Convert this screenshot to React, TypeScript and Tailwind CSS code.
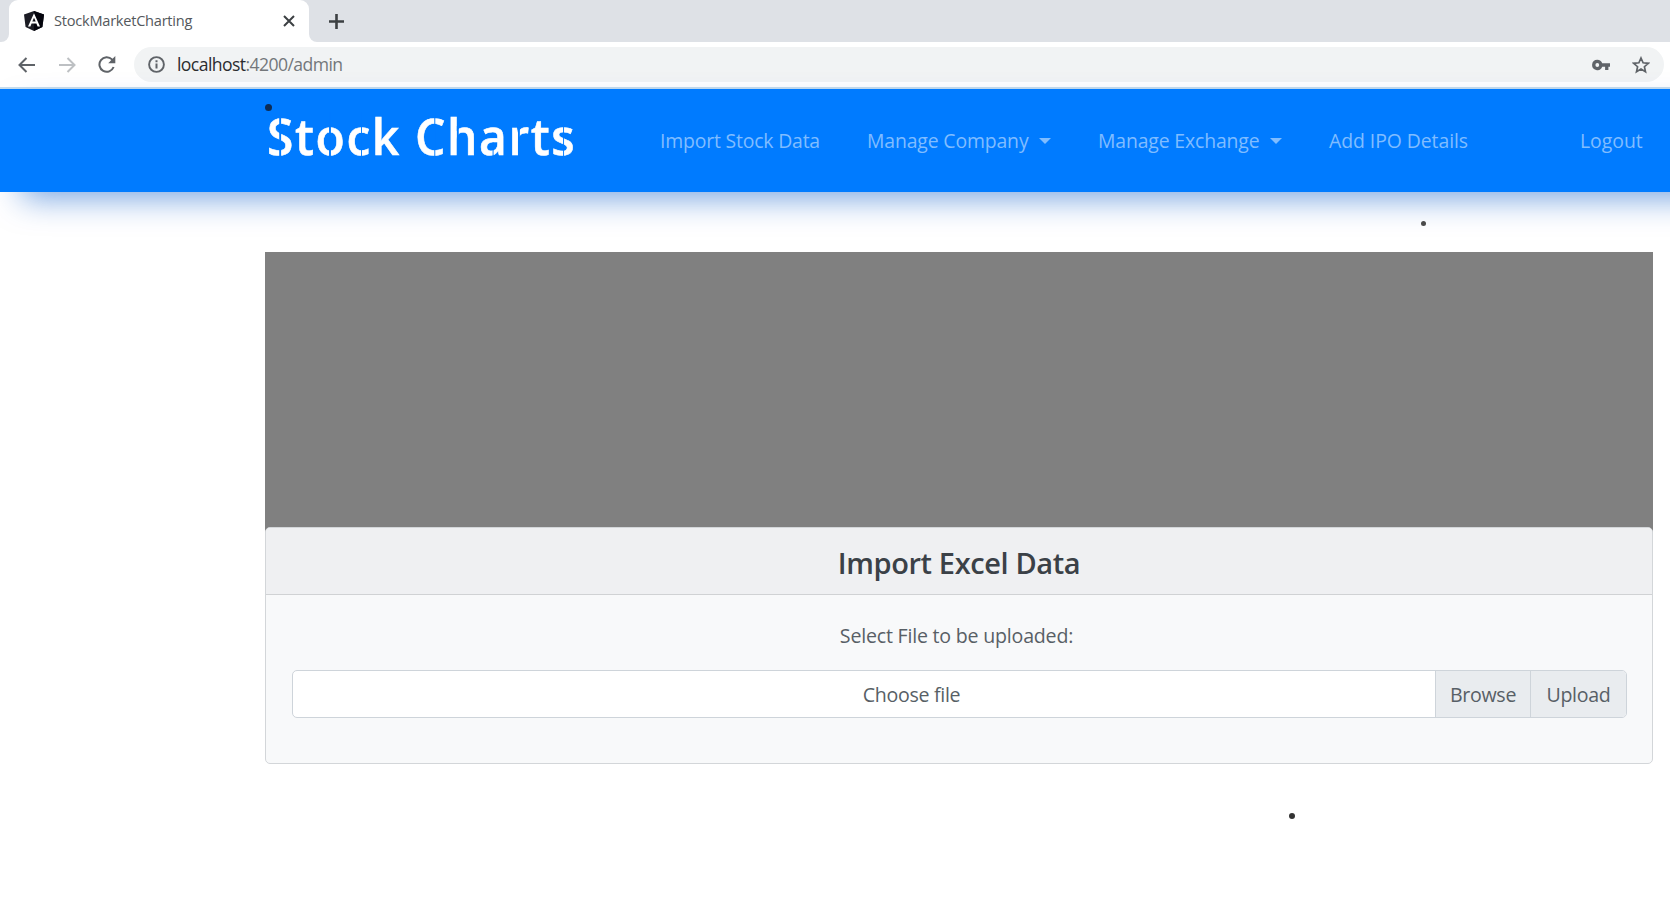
import React from "react";

const navItems = [
  { label: "Import Stock Data", box: "w-[207px]", caret: false, track: "tracking-[-0.18px]" },
  { label: "Manage Company", box: "w-[231px]", caret: true, track: "tracking-[-0.14px]" },
  { label: "Manage Exchange", box: "w-[231px]", caret: true, track: "tracking-[-0.14px]" },
  { label: "Add IPO Details", box: "w-[251px]", caret: false, track: "tracking-[-0.06px]" },
  { label: "Logout", box: "w-[80px]", caret: false, track: "tracking-[0px]" },
];

/* Stencil cuts: one thin bar per letter, in the colour of the bar behind it. */
const stencil = [
  { ch: "S", cut: "left-[44%] top-[12px] h-[48px]" },
  { ch: "t", cut: "" },
  { ch: "o", cut: "left-[45%] top-[12px] h-[48px]" },
  { ch: "c", cut: "left-[56%] top-[12px] h-[48px]" },
  { ch: "k", cut: "" },
  { ch: " ", cut: "" },
  { ch: "C", cut: "left-[60%] top-[12px] h-[48px]" },
  { ch: "h", cut: "left-[31%] top-[26px] h-[34px]" },
  { ch: "a", cut: "left-[45%] top-[42px] h-[18px]" },
  { ch: "r", cut: "left-[45%] top-[24px] h-[34px]" },
  { ch: "t", cut: "" },
  { ch: "s", cut: "left-[46%] top-[24px] h-[34px]" },
];

function AngularLogo() {
  return (
    <svg width="20" height="20" viewBox="0 0 20 20">
      <path d="M10 0 20 3.4 18.4 16 10 20 1.6 16 0 3.4Z" fill="#1b1c24" />
      <path d="M10 0 20 3.4 18.4 16 10 20Z" fill="#04050d" />
      <path d="M10 2.2 4 15.4h2.4l1.2-3h4.8l1.2 3H16Zm0 4.5 1.7 3.9H8.3Z" fill="#fff" fillRule="evenodd" />
    </svg>
  );
}

function TabStrip() {
  return (
    <div className="flex h-[42px] items-end bg-[#dee1e6]">
      <div className="flex h-[42px] w-[9px] items-end bg-white">
        <div className="h-[42px] w-[9px] rounded-br-[8px] bg-[#dee1e6]" />
      </div>
      <div className="flex h-[42px] w-[300px] items-center rounded-t-[9px] bg-white pl-[15px] shadow-[-9px_-10px_0_#dee1e6]">
        <AngularLogo />
        <span className="ml-[10px] w-[229px] whitespace-nowrap pb-px text-[14.6px] tracking-[-0.25px] text-[#54585c]">
          StockMarketCharting
        </span>
        <svg width="12" height="12" viewBox="0 0 12 12" stroke="#3c4043" strokeWidth="2">
          <path d="M1 1 11 11M11 1 1 11" />
        </svg>
      </div>
      <div className="flex h-[42px] w-[9px] items-end bg-white">
        <div className="h-[42px] w-[9px] rounded-bl-[8px] bg-[#dee1e6]" />
      </div>
      <div className="flex h-[42px] items-center pl-[11px]">
        <svg width="15" height="15" viewBox="0 0 15 15" stroke="#3c4043" strokeWidth="2.6">
          <path d="M7.5 0V15M0 7.5H15" />
        </svg>
      </div>
    </div>
  );
}

function Toolbar() {
  return (
    <div className="flex h-[47px] items-center border-b-2 border-[#c5dced] bg-white pl-[18px] pr-[6px]">
      <svg width="17" height="16" viewBox="0 0 17 16" fill="none" stroke="#5f6368" strokeWidth="2">
        <path d="M17 8H1.5M8.5 1 1.5 8l7 7" />
      </svg>
      <svg className="ml-[24px]" width="17" height="16" viewBox="0 0 17 16" fill="none" stroke="#bdc0c3" strokeWidth="2">
        <path d="M0 8H15.5M8.5 1l7 7-7 7" />
      </svg>
      <svg className="ml-[22px]" width="18" height="17" viewBox="0 0 18 17" fill="none" stroke="#5f6368" strokeWidth="2">
        <path d="M15.6 11A7.3 7.3 0 1 1 14 3.4L16 5.4" />
        <path d="M17.3 0V7.2H10.2Z" fill="#5f6368" stroke="none" />
      </svg>
      <div className="ml-[18px] flex h-[35px] flex-1 items-center rounded-full bg-[#f1f3f4] pl-[14px] pr-[14px]">
        <svg width="17" height="17" viewBox="0 0 17 17" fill="none" stroke="#5f6368" strokeWidth="1.9">
          <circle cx="8.5" cy="8.5" r="7.4" />
          <path d="M8.5 7.5v5M8.5 4.3v2" strokeWidth="2" />
        </svg>
        <span className="ml-[12px] flex-1 whitespace-nowrap text-[17.6px] tracking-[-0.58px] text-[#73777b]">
          <span className="text-[#2b2c2f]">localhost</span>:4200/admin
        </span>
        <svg width="18" height="12" viewBox="0 0 18 12" fill="#5f6368">
          <path fillRule="evenodd" d="M5.3.7a5.2 5.2 0 0 1 4.9 3.6H18v3.4h-1.6V11h-3.3V7.7h-2.9A5.2 5.2 0 1 1 5.3.7Zm0 3.4a1.9 1.9 0 1 0 0 3.8 1.9 1.9 0 0 0 0-3.8Z" />
        </svg>
        <svg className="ml-[22px]" width="18" height="18" viewBox="0 0 18 18" fill="none" stroke="#5f6368" strokeWidth="1.7">
          <path d="m9 2 2.1 4.8 5.2.5-3.9 3.4 1.1 5.1L9 13.1l-4.5 2.7 1.1-5.1L1.7 7.3l5.2-.5Z" />
        </svg>
      </div>
    </div>
  );
}

function Navbar() {
  return (
    <nav className="relative flex h-[103px] w-[1730px] items-center bg-[#007bff] pl-[267px] shadow-[14px_14px_32px_-8px_rgba(0,85,200,0.55)]">
      <div className="w-[393px] pb-[12px]">
        <span className="inline-block origin-left scale-x-[0.94] whitespace-pre text-[51px] font-semibold leading-[60px] tracking-[1.7px] text-white [-webkit-text-stroke:0.6px_white]">
          {stencil.map((l, i) => (
            <span key={i} className="relative">
              {l.ch}
              {l.cut && <i className={`${l.cut} absolute w-[1.6px] bg-[#007bff]`} />}
            </span>
          ))}
        </span>
      </div>
      {navItems.map((n) => (
        <div key={n.label} className={`${n.box} ${n.track} flex shrink-0 items-center whitespace-nowrap pt-px text-[19.4px] text-[#80bdff]`}>
          {n.label}
          {n.caret && (
            <span className="ml-[11px] border-x-[6px] border-t-[6px] border-x-transparent border-t-[#80bdff]" />
          )}
        </div>
      ))}
      <span className="absolute left-[265px] top-[15px] size-[7px] rounded-full bg-[#0d2c55]" />
    </nav>
  );
}

export default function App() {
  return (
    <div className="relative h-[924px] w-[1670px] overflow-hidden bg-white font-['Open_Sans','Noto_Sans',sans-serif]">
      <TabStrip />
      <Toolbar />
      <Navbar />
      <main className="ml-[265px] mt-[60px] w-[1388px] text-[#585f66]">
        <div className="h-[280px] bg-[#808080]" />
        <section className="relative -mt-[5px] h-[237px] rounded-[5px] border border-[#d3d6d9] bg-[#f8f9fa] text-center">
          <h2 className="flex h-[67px] items-center justify-center rounded-t-[4px] border-b border-[#d0d2d4] bg-[#eff0f2] pt-[3px] text-[29px] font-semibold tracking-[-0.38px] text-[#3b4147]">
            Import Excel Data
          </h2>
          <p className="mt-[26px] pr-[5px] text-[19.6px] leading-[30px] tracking-[-0.21px]">
            Select File to be uploaded:
          </p>
          <div className="ml-[26px] mt-[19px] flex h-[48px] w-[1335px] overflow-hidden rounded-[5px] border border-[#ced4da] bg-white text-[19.6px] leading-[30px] tracking-[-0.3px]">
            <div className="flex w-[1142px] items-center justify-center pl-[95px] pt-[2px]">Choose file</div>
            <div className="flex w-[95px] items-center justify-center border-l border-[#ced4da] bg-[#e9ecef] pt-[2px]">Browse</div>
            <div className="flex flex-1 items-center justify-center border-l border-[#ced4da] bg-[#e9ecef] pt-[2px]">Upload</div>
          </div>
        </section>
      </main>
      <span className="absolute left-[1421px] top-[221px] size-[5px] rounded-full bg-[#4a4a4a]" />
      <span className="absolute left-[1289px] top-[813px] size-[6px] rounded-full bg-[#333]" />
    </div>
  );
}
